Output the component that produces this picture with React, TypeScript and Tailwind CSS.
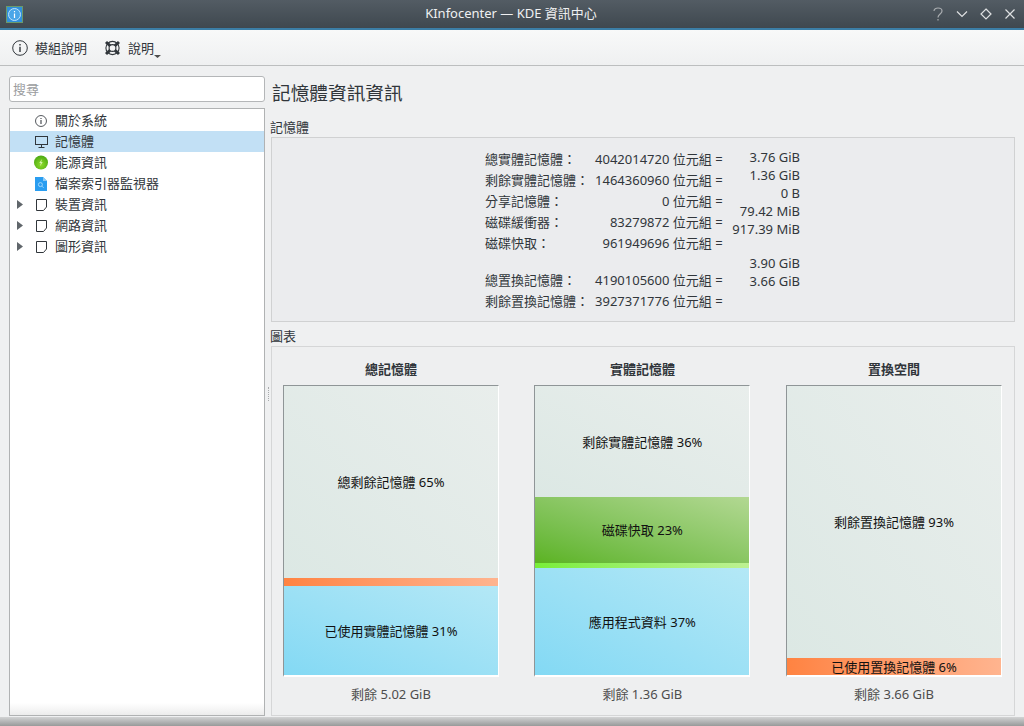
import React from "react";

const font = { fontFamily: '"Noto Sans","Noto Sans CJK TC",sans-serif' };

function InfoIcon({ size = 16 }: { size?: number }) {
  return (
    <svg width={size} height={size} viewBox="0 0 16 16" fill="none" stroke="#31363b" strokeWidth={size > 14 ? 1 : 1.1}>
      <circle cx="8" cy="8" r={7.3} />
      <path d="M8 6.8V12M8 4V5.4" strokeWidth={1.4} />
    </svg>
  );
}

function LifeBuoyIcon() {
  return (
    <svg width="17" height="16" viewBox="0 0 17 16" fill="none" stroke="#31363b">
      <circle cx="8.5" cy="8" r="6.6" strokeWidth="1.1" />
      <circle cx="8.5" cy="8" r="3.4" strokeWidth="1.1" />
      <path d="M2 2 6 5.6M15 2 11 5.6M2 14 6 10.4M15 14 11 10.4" strokeWidth="3" />
    </svg>
  );
}

function MonitorIcon() {
  return (
    <svg width="13" height="12" viewBox="0 0 13 12" fill="none" stroke="#31363b">
      <rect x="0.5" y="0.5" width="12" height="8" />
      <path d="M6.5 9v2M3.5 11.5h6" />
    </svg>
  );
}

function PageIcon() {
  return (
    <svg width="11" height="12" viewBox="0 0 11 12" fill="none" stroke="#31363b">
      <path d="M0.5 0.5h10v7.5l-3 3.5h-7z" />
    </svg>
  );
}

function EnergyIcon() {
  return (
    <svg width="15" height="15" viewBox="0 0 14 14">
      <defs>
        <radialGradient id="eg" cx="50%" cy="65%" r="65%">
          <stop offset="0" stopColor="#8fdc2c" />
          <stop offset="1" stopColor="#4aa812" />
        </radialGradient>
      </defs>
      <circle cx="7" cy="7" r="7" fill="url(#eg)" />
      <path d="M7.9 3.4 5.3 7.6h1.5L6.1 10.8l2.6-4.2H7.2z" fill="#d8f4b0" />
    </svg>
  );
}

function FileSearchIcon() {
  return (
    <svg width="12" height="14" viewBox="0 0 12 14">
      <path d="M0 0h8l4 4v10H0z" fill="#2a9df0" />
      <path d="M8 0l4 4H8z" fill="#8ccbf8" />
      <circle cx="5.4" cy="7.6" r="2" fill="none" stroke="#a9dafb" strokeWidth="0.9" />
      <path d="M7 9.2 8.6 10.8" stroke="#a9dafb" strokeWidth="0.9" />
    </svg>
  );
}

function AppIcon() {
  return (
    <svg width="17" height="17" viewBox="0 0 17 17">
      <rect x="0" y="0" width="17" height="17" fill="#6a9a6c" />
      <rect x="1" y="1" width="15" height="15" fill="#2f8fdc" />
      <circle cx="8.5" cy="8.5" r="6" fill="#4aa6e8" stroke="#bfe2f8" strokeWidth="1" />
      <path d="M8.5 7.6V12M8.5 5V6.3" stroke="#ffffff" strokeWidth="1.2" />
    </svg>
  );
}

function Arrow() {
  return (
    <svg width="6" height="9" viewBox="0 0 6 9">
      <path d="M0 0 6 4.5 0 9z" fill="#60666b" />
    </svg>
  );
}

function TreeRow({
  icon,
  label,
  arrow,
  selected,
}: {
  icon: React.ReactNode;
  label: string;
  arrow?: boolean;
  selected?: boolean;
}) {
  return (
    <div className={`h-[21px] flex items-center ${selected ? "bg-[#c2e0f5]" : ""}`}>
      <div className="w-[24px] pl-[7px] flex items-center">{arrow && <Arrow />}</div>
      <div className="w-[14px] flex justify-center items-center">{icon}</div>
      <span className="ml-[7px] text-[#31363b] text-[13px]">{label}</span>
    </div>
  );
}

function Segment({
  cls,
  label,
  tight,
}: {
  cls: string;
  label?: string;
  tight?: boolean;
}) {
  return (
    <div
      className={`flex items-center justify-center text-[13px] text-[#111] ${cls} ${
        tight ? "leading-none pt-[1px]" : label ? "pt-[2px]" : ""
      }`}
    >
      {label}
    </div>
  );
}

const freeCls = "bg-gradient-to-tr from-[#dce8e4] to-[#e9eeec]";
const blueCls = "bg-gradient-to-tr from-[#83d9f4] to-[#b4e8f6]";
const orangeCls = "bg-gradient-to-r from-[#ff8341] to-[#ffb48f]";

function Chart({
  title,
  caption,
  children,
}: {
  title: string;
  caption: string;
  children: React.ReactNode;
}) {
  return (
    <div className="w-[216px] flex flex-col">
      <div className="h-[33px] pt-[2px] flex items-center justify-center font-bold text-[13px] text-[#31363b]">{title}</div>
      <div className="h-[292px] flex flex-col border-t border-l border-t-[#8f9597] border-l-[#8f9597] border-b-2 border-r border-b-white border-r-white">
        {children}
      </div>
      <div className="h-[34px] pt-[2px] flex items-center justify-center text-[13px] text-[#4d4d4d]">{caption}</div>
    </div>
  );
}

const rows: [string, string][] = [
  ["總實體記憶體：", "4042014720 位元組 ="],
  ["剩餘實體記憶體：", "1464360960 位元組 ="],
  ["分享記憶體：", "0 位元組 ="],
  ["磁碟緩衝器：", "83279872 位元組 ="],
  ["磁碟快取：", "961949696 位元組 ="],
];
const rows2: [string, string][] = [
  ["總置換記憶體：", "4190105600 位元組 ="],
  ["剩餘置換記憶體：", "3927371776 位元組 ="],
];

function InfoRow({ r }: { r: [string, string] }) {
  return (
    <div className="h-[21px] flex items-center justify-between">
      <span>{r[0]}</span>
      <span>{r[1]}</span>
    </div>
  );
}

export default function App() {
  return (
    <div style={font} className="w-[1024px] h-[726px] flex flex-col overflow-hidden bg-[#eff0f1] text-[13px]">
      {/* Title bar */}
      <div className="h-[30px] shrink-0 flex items-center bg-gradient-to-b from-[#535c64] to-[#3f484f] border-b-2 border-b-[#3b7ea6] pl-[6px] pr-[8px]">
        <div className="flex-1 flex items-center">
          <AppIcon />
        </div>
        <div className="text-center text-[13px] text-[#eff0f1]">KInfocenter — KDE 資訊中心</div>
        <div className="flex-1 flex items-center justify-end gap-[12px]">
          <svg width="12" height="14" viewBox="0 0 12 14" fill="none" stroke="#a9adb0" strokeWidth="1.2">
            <path d="M2 4c0-4 8-4 8 0 0 3-4 3-4 6.5M6 12v1.5" />
          </svg>
          <svg width="12" height="12" viewBox="0 0 12 12" fill="none" stroke="#dfe1e2" strokeWidth="1.2">
            <path d="M1 3.5 6 8.5 11 3.5" />
          </svg>
          <svg width="12" height="12" viewBox="0 0 12 12" fill="none" stroke="#dfe1e2" strokeWidth="1.2">
            <path d="M6 1 11 6 6 11 1 6z" />
          </svg>
          <svg width="12" height="12" viewBox="0 0 12 12" fill="none" stroke="#dfe1e2" strokeWidth="1.2">
            <path d="M1.5 1.5 10.5 10.5M10.5 1.5 1.5 10.5" />
          </svg>
        </div>
      </div>

      {/* Toolbar */}
      <div className="h-[36px] shrink-0 flex items-center bg-gradient-to-b from-[#f8f9f9] to-[#eff0f1] border-b border-b-[#bcbebf] pl-[12px] pt-[1px] text-[#31363b]">
        <InfoIcon />
        <span className="ml-[7px] pt-[1px]">模組說明</span>
        <div className="ml-[17px]">
          <LifeBuoyIcon />
        </div>
        <span className="ml-[7px] pt-[1px]">說明</span>
        <svg className="mt-[16px]" width="7" height="3" viewBox="0 0 7 3">
          <path d="M0 0h7L3.5 3z" fill="#4d4d4d" />
        </svg>
      </div>

      {/* Body */}
      <div className="flex-1 min-h-0 flex items-stretch pl-[9px] pr-[9px] pt-[10px] pb-[1px]">
        {/* Sidebar */}
        <div className="w-[256px] shrink-0 flex flex-col gap-[6px]">
          <div className="h-[26px] bg-white border border-[#b4b6b8] rounded-[3px] flex items-center pl-[3px] pt-[1px] text-[#9a9c9e]">
            搜尋
          </div>
          <div className="flex-1 flex flex-col bg-white border border-[#b0b2b3] pt-[1px]">
            <TreeRow icon={<InfoIcon size={12} />} label="關於系統" />
            <TreeRow icon={<MonitorIcon />} label="記憶體" selected />
            <TreeRow icon={<EnergyIcon />} label="能源資訊" />
            <TreeRow icon={<FileSearchIcon />} label="檔案索引器監視器" />
            <TreeRow icon={<PageIcon />} label="裝置資訊" arrow />
            <TreeRow icon={<PageIcon />} label="網路資訊" arrow />
            <TreeRow icon={<PageIcon />} label="圖形資訊" arrow />
            <div className="flex-1" />
            <div className="h-[12px] bg-gradient-to-b from-white to-[#ececec]" />
          </div>
        </div>

        {/* Splitter */}
        <div className="w-[6px] shrink-0 flex items-center justify-center">
          <div className="h-[14px] mt-[-5px] border-l border-dotted border-l-[#a8aaac]" />
        </div>

        {/* Content */}
        <div className="flex-1 min-w-0 flex flex-col text-[#31363b]">
          <div className="h-[33px] shrink-0 flex items-center pl-[1px] text-[18.67px]">記憶體資訊資訊</div>
          <div className="h-[28px] shrink-0 flex items-end ml-[-1px] text-[13px]">記憶體</div>
          <div className="h-[185px] shrink-0 bg-[#ebecee] border border-[#d0d1d2] flex justify-start pl-[213px] pt-[11px]">
            <div className="w-[237.6px]">
              {rows.map((r) => (
                <InfoRow key={r[0]} r={r} />
              ))}
              <div className="h-[16px]" />
              {rows2.map((r) => (
                <InfoRow key={r[0]} r={r} />
              ))}
            </div>
            <div className="ml-[7.4px] mt-[-1px] w-[70px] text-right leading-[18px]">
              <div>3.76 GiB</div>
              <div>1.36 GiB</div>
              <div>0 B</div>
              <div>79.42 MiB</div>
              <div>917.39 MiB</div>
              <div className="h-[16px]" />
              <div>3.90 GiB</div>
              <div>3.66 GiB</div>
            </div>
          </div>
          <div className="h-[24px] shrink-0 flex items-end ml-[-1px]">圖表</div>
          <div className="flex-1 min-h-0 bg-[#eeeff0] border border-[#d5d6d7] flex pl-[11px] pt-[5px] gap-[35px]">
            <Chart title="總記憶體" caption="剩餘 5.02 GiB">
              <Segment cls={`h-[192px] ${freeCls}`} label="總剩餘記憶體 65%" />
              <Segment cls={`h-[8px] ${orangeCls}`} />
              <Segment cls={`flex-1 ${blueCls}`} label="已使用實體記憶體 31%" />
            </Chart>
            <div className="ml-[0.4px] flex">
              <Chart title="實體記憶體" caption="剩餘 1.36 GiB">
                <Segment cls={`h-[111px] ${freeCls}`} label="剩餘實體記憶體 36%" />
                <Segment cls="h-[66px] bg-gradient-to-tr from-[#5bb31f] to-[#b2d892]" label="磁碟快取 23%" />
                <Segment cls="h-[5px] bg-gradient-to-r from-[#78ee38] to-[#bdf192]" />
                <Segment cls={`flex-1 ${blueCls}`} label="應用程式資料 37%" />
              </Chart>
            </div>
            <div className="ml-[0.6px] flex">
              <Chart title="置換空間" caption="剩餘 3.66 GiB">
                <Segment cls={`h-[272px] ${freeCls}`} label="剩餘置換記憶體 93%" />
                <Segment cls={`flex-1 ${orangeCls}`} label="已使用置換記憶體 6%" tight />
              </Chart>
            </div>
          </div>
        </div>
      </div>

      {/* Window shadow */}
      <div className="h-[9px] shrink-0 bg-gradient-to-b from-[#d2d3d4] to-[#989a9a]" />
    </div>
  );
}
